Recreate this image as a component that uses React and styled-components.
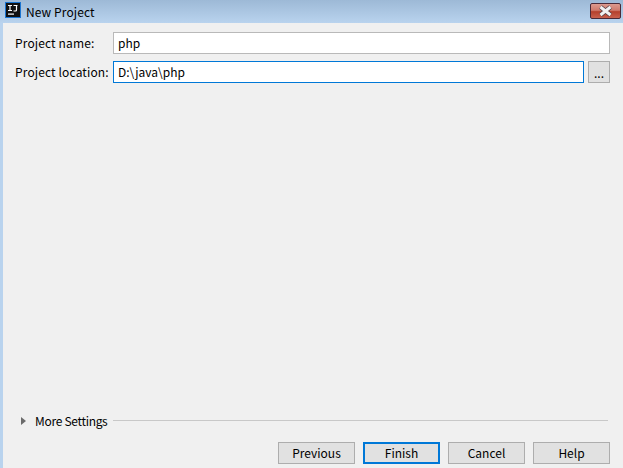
import { createGlobalStyle } from 'styled-components';
import styled from 'styled-components';

const Global = createGlobalStyle`
  html, body {
    margin: 0;
    padding: 0;
    width: 623px;
    height: 468px;
    overflow: hidden;
  }
  * {
    box-sizing: border-box;
  }
`;

const Dialog = styled.div`
  width: 623px;
  height: 468px;
  display: flex;
  flex-direction: column;
  padding-left: 3px;
  background: #b9d3ee;
  font-family: "Noto Sans CJK SC", "Open Sans", "Liberation Sans", sans-serif;
  font-size: 12px;
  color: #000;
`;

const TitleBar = styled.div`
  height: 23px;
  flex: none;
  margin-left: -3px;
  padding: 0 5px 0 5px;
  display: flex;
  align-items: center;
  gap: 5px;
  background: linear-gradient(to bottom, #9db9d6, #b9d3ee);
`;

const AppIcon = styled.svg`
  width: 16px;
  height: 16px;
  flex: none;
  margin-top: -3px;
`;

const Title = styled.span`
  flex: 1;
  font-size: 12px;
  letter-spacing: 0.1px;
  color: #000;
`;

const CloseButton = styled.div`
  width: 31px;
  height: 16px;
  margin-top: -1px;
  margin-right: -3px;
  border: 1px solid #4a2a38;
  border-radius: 2px;
  display: flex;
  align-items: center;
  justify-content: center;
  background: linear-gradient(to bottom, #dc9a8e 0%, #cf7a6c 45%, #b5402c 55%, #c9614e 100%);
`;

const Body = styled.div`
  flex: 1;
  display: flex;
  flex-direction: column;
  background: #f0f0f0;
  padding: 9px 13px 4px 12px;
`;

const Form = styled.div`
  display: grid;
  grid-template-columns: 98px 1fr 26px;
  row-gap: 7px;
  align-items: center;
`;

const Label = styled.label`
  padding-bottom: 2px;
  font-size: 12px;
  letter-spacing: 0.13px;
  white-space: nowrap;
`;

const Field = styled.div`
  height: 22px;
  grid-column: ${props => (props.$wide ? '2 / 4' : '2')};
  padding: 0 4px 2px;
  display: flex;
  align-items: center;
  background: #fff;
  font-size: 12px;
  border: 1px solid ${props => (props.$focused ? '#0078d7' : '#b9b9b9')};
`;

const BrowseButton = styled.div`
  width: 22px;
  height: 22px;
  justify-self: end;
  border: 1px solid #adadad;
  background: #e1e1e1;
  display: flex;
  align-items: center;
  justify-content: center;
  font-size: 12px;
`;

const Spacer = styled.div`
  flex: 1;
`;

const MoreRow = styled.div`
  display: flex;
  align-items: center;
  margin-left: 6px;
  margin-right: 2px;
  gap: 6px;
`;

const Arrow = styled.span`
  width: 0;
  height: 0;
  border-left: 5px solid #6b6b6b;
  border-top: 4px solid transparent;
  border-bottom: 4px solid transparent;
  margin-right: 3px;
`;

const MoreLabel = styled.span`
  letter-spacing: -0.3px;
`;

const Rule = styled.div`
  flex: 1;
  height: 1px;
  background: #c8c8c8;
`;

const Footer = styled.div`
  display: flex;
  justify-content: flex-end;
  gap: 8px;
  margin-top: 13px;
`;

const Button = styled.div`
  width: 77px;
  height: 22px;
  padding-bottom: 2px;
  display: flex;
  align-items: center;
  justify-content: center;
  background: #e1e1e1;
  font-size: 12px;
  border: ${props => (props.$primary ? '2px solid #0078d7' : '1px solid #adadad')};
`;

const App = () => (
  <>
    <Global />
    <Dialog>
      <TitleBar>
        <AppIcon viewBox="0 0 16 16">
          <rect x="0" y="0" width="16" height="16" fill="#1b74d0" />
          <rect x="1" y="1" width="14" height="14" fill="#111" />
          <path d="M3 3.5h4M5 3.5v5M3 8.5h4M8.5 3.5h4M11.5 3.5v4.5q0 1-1 1H8.5" stroke="#fff" strokeWidth="1.2" fill="none" />
          <rect x="3" y="11.5" width="6" height="1.2" fill="#fff" />
        </AppIcon>
        <Title>New Project</Title>
        <CloseButton>
          <svg width="17" height="12" viewBox="0 0 17 12">
            <path d="M3.5 2 L13.5 10 M13.5 2 L3.5 10" stroke="#4a3a40" strokeWidth="4.4" fill="none" />
            <path d="M3.5 2 L13.5 10 M13.5 2 L3.5 10" stroke="#f2f2f2" strokeWidth="3" fill="none" />
          </svg>
        </CloseButton>
      </TitleBar>
      <Body>
        <Form>
          <Label>Project name:</Label>
          <Field $wide>php</Field>
          <Label>Project location:</Label>
          <Field $focused>D:\java\php</Field>
          <BrowseButton>...</BrowseButton>
        </Form>
        <Spacer />
        <MoreRow>
          <Arrow />
          <MoreLabel>More Settings</MoreLabel>
          <Rule />
        </MoreRow>
        <Footer>
          <Button>Previous</Button>
          <Button $primary>Finish</Button>
          <Button>Cancel</Button>
          <Button>Help</Button>
        </Footer>
      </Body>
    </Dialog>
  </>
);

export default App;
